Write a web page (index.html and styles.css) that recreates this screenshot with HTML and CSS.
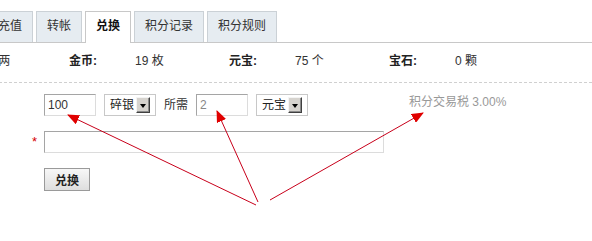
FILE: index.html
```html
<!DOCTYPE html>
<html lang="zh-CN">
<head>
<meta charset="utf-8">
<title>兑换</title>
<link rel="stylesheet" href="styles.css">
</head>
<body>
<div class="page">
  <ul class="tabs">
    <li class="tab">充值</li>
    <li class="tab">转帐</li>
    <li class="tab active">兑换</li>
    <li class="tab">积分记录</li>
    <li class="tab">积分规则</li>
  </ul>
  <div class="info">
    <div class="group"><span class="label">银两:</span><span class="value">100 两</span></div>
    <div class="group"><span class="label">金币:</span><span class="value">19 枚</span></div>
    <div class="group"><span class="label">元宝:</span><span class="value">75 个</span></div>
    <div class="group"><span class="label">宝石:</span><span class="value">0 颗</span></div>
  </div>
  <div class="form">
    <div class="row row-first">
      <input class="field short" type="text" value="100">
      <span class="select"><span class="select-text">碎银</span><span class="select-btn"><span class="tri"></span></span></span>
      <span class="need">所需</span>
      <input class="field short muted" type="text" value="2">
      <span class="select"><span class="select-text">元宝</span><span class="select-btn"><span class="tri"></span></span></span>
      <span class="tax">积分交易税 3.00%</span>
    </div>
    <div class="row row-second">
      <span class="star">*</span>
      <input class="field long" type="text" value="">
    </div>
    <div class="row row-third">
      <button class="btn" type="button">兑换</button>
    </div>
  </div>
  <svg class="annot" width="592" height="241" viewBox="0 0 592 241">
    <defs>
      <marker id="ah" markerWidth="12" markerHeight="10" refX="11" refY="5" orient="auto" markerUnits="userSpaceOnUse">
        <path d="M0,0 L12,5 L0,10 Z" fill="#e00000"/>
      </marker>
    </defs>
    <line x1="256" y1="205" x2="68" y2="115" stroke="#c8001a" stroke-width="1" marker-end="url(#ah)"/>
    <line x1="258" y1="202" x2="217" y2="111" stroke="#c8001a" stroke-width="1" marker-end="url(#ah)"/>
    <line x1="270" y1="200" x2="423" y2="113" stroke="#c8001a" stroke-width="1" marker-end="url(#ah)"/>
  </svg>
</div>
</body>
</html>
```

FILE: styles.css
```css
html, body {
  margin: 0;
  padding: 0;
  background: #fff;
}

body {
  width: 592px;
  height: 241px;
  overflow: hidden;
  font-family: "Liberation Sans", "Noto Sans CJK SC", sans-serif;
  font-size: 12px;
  color: #333;
}

.page {
  position: relative;
  width: 592px;
  height: 241px;
}

.tabs {
  list-style: none;
  margin: 0 0 0 -13px;
  padding: 11px 0 0 0;
  display: flex;
  gap: 3px;
  border-bottom: 1px solid #c8c8c8;
  height: 31px;
}

.tab {
  box-sizing: border-box;
  height: 31px;
  line-height: 28px;
  padding: 0 10px;
  border: 1px solid #cbd1d6;
  border-bottom: none;
  background: #e6ecf1;
  color: #333;
  white-space: nowrap;
}

.tab.active {
  background: #fff;
  height: 32px;
  font-weight: bold;
  color: #111;
  border-color: #c8c8c8;
}

.info {
  display: flex;
  margin-left: -91px;
  padding: 8px 0 11px 0;
  line-height: 20px;
  border-bottom: 1px dashed #d0d0d0;
}

.group {
  display: flex;
  flex: none;
}

.label {
  width: 66px;
  font-weight: bold;
  color: #222;
}

.value {
  width: 94px;
  color: #333;
}

.form {
  padding: 11px 0 0 44px;
}

.row {
  display: flex;
  align-items: center;
}

.row-first {
  gap: 8px;
  align-items: flex-start;
}

.row-second {
  margin-top: 15px;
}

.row-third {
  margin-top: 15px;
}

.field {
  box-sizing: border-box;
  height: 22px;
  margin: 0;
  padding: 0 3px;
  border: 1px solid;
  border-color: #a5a5a5 #dcdcdc #dcdcdc #a5a5a5;
  font-family: "Liberation Sans", "Noto Sans CJK SC", sans-serif;
  font-size: 12px;
  color: #333;
  background: #fff;
  outline: none;
}

.field.short {
  width: 52px;
}

.field.muted {
  color: #888;
}

.field.long {
  width: 340px;
}

.select {
  box-sizing: border-box;
  width: 52px;
  height: 22px;
  border: 1px solid #c8c8c8;
  display: flex;
  align-items: center;
  padding: 0 5px 0 5px;
  background: #fff;
}

.select-text {
  flex: 1;
  color: #222;
  line-height: 20px;
}

.select-btn {
  box-sizing: border-box;
  width: 14px;
  height: 16px;
  background: #d6d3ce;
  border: 1px solid;
  border-color: #f4f4f4 #404040 #404040 #f4f4f4;
  box-shadow: inset -1px -1px 0 #8a8a8a;
  display: flex;
  align-items: center;
  justify-content: center;
}

.tri {
  width: 0;
  height: 0;
  border-left: 3.5px solid transparent;
  border-right: 3.5px solid transparent;
  border-top: 4px solid #000;
  margin-top: 1px;
}

.need {
  line-height: 22px;
  color: #333;
}

.tax {
  margin-left: 93px;
  line-height: 16px;
  color: #999;
}

.star {
  width: 12px;
  margin-left: -12px;
  color: #d60000;
  font-size: 13px;
  line-height: 22px;
}

.btn {
  box-sizing: border-box;
  width: 46px;
  height: 23px;
  margin: 0;
  padding: 0;
  border: 1px solid #9a9a9a;
  background: linear-gradient(#f7f7f7, #dedede);
  font-family: "Liberation Sans", "Noto Sans CJK SC", sans-serif;
  font-size: 12px;
  font-weight: bold;
  color: #222;
}

.annot {
  position: absolute;
  left: 0;
  top: 0;
  pointer-events: none;
}
```
